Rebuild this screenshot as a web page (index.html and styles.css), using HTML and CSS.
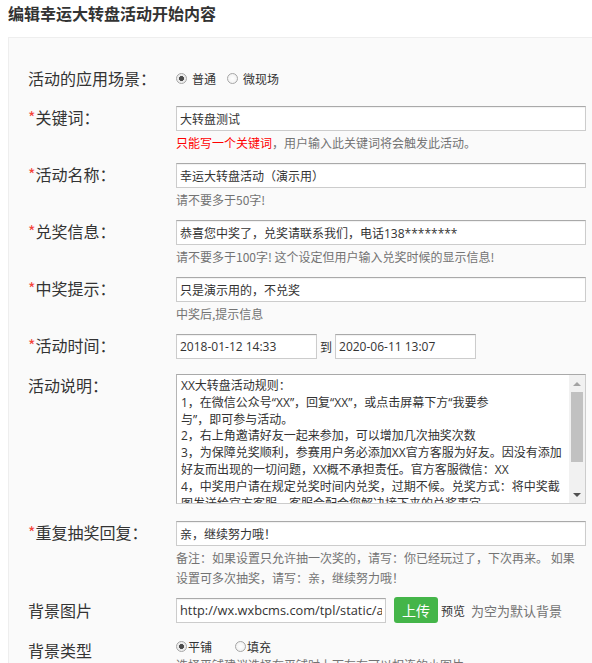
FILE: index.html
```html
<!DOCTYPE html>
<html lang="zh-CN">
<head>
<meta charset="utf-8">
<title>编辑幸运大转盘活动开始内容</title>
<link rel="stylesheet" href="styles.css">
</head>
<body>
<h3 class="page-title">编辑幸运大转盘活动开始内容</h3>
<div class="panel">
  <div class="row row-scene">
    <label class="lbl">活动的应用场景：</label>
    <div class="ctrl radios">
      <label class="radio"><input type="radio" name="scene" checked><span>普通</span></label>
      <label class="radio"><input type="radio" name="scene"><span>微现场</span></label>
    </div>
  </div>

  <div class="row">
    <label class="lbl"><span class="req">*</span>关键词：</label>
    <div class="ctrl">
      <input class="input" type="text" value="大转盘测试">
      <div class="help"><span class="warn">只能写一个关键词</span>，用户输入此关键词将会触发此活动。</div>
    </div>
  </div>

  <div class="row">
    <label class="lbl"><span class="req">*</span>活动名称：</label>
    <div class="ctrl">
      <input class="input" type="text" value="幸运大转盘活动（演示用）">
      <div class="help">请不要多于50字!</div>
    </div>
  </div>

  <div class="row">
    <label class="lbl"><span class="req">*</span>兑奖信息：</label>
    <div class="ctrl">
      <input class="input" type="text" value="恭喜您中奖了，兑奖请联系我们，电话138********">
      <div class="help">请不要多于100字! 这个设定但用户输入兑奖时候的显示信息!</div>
    </div>
  </div>

  <div class="row">
    <label class="lbl"><span class="req">*</span>中奖提示：</label>
    <div class="ctrl">
      <input class="input" type="text" value="只是演示用的，不兑奖">
      <div class="help">中奖后,提示信息</div>
    </div>
  </div>

  <div class="row row-date">
    <label class="lbl"><span class="req">*</span>活动时间：</label>
    <div class="ctrl dates">
      <input class="input date" type="text" value="2018-01-12 14:33">
      <span class="to">到</span>
      <input class="input date" type="text" value="2020-06-11 13:07">
    </div>
  </div>

  <div class="row row-desc">
    <label class="lbl">活动说明：</label>
    <div class="ctrl desc-wrap">
      <textarea class="desc" wrap="off" readonly>XX大转盘活动规则：
1，在微信公众号“XX”，回复“XX”，或点击屏幕下方“我要参
与”，即可参与活动。
2，右上角邀请好友一起来参加，可以增加几次抽奖次数
3，为保障兑奖顺利，参赛用户务必添加XX官方客服为好友。因没有添加
好友而出现的一切问题，XX概不承担责任。官方客服微信：XX
4，中奖用户请在规定兑奖时间内兑奖，过期不候。兑奖方式：将中奖截
图发送给官方客服，客服会配合您解决接下来的兑奖事宜。</textarea>
      <div class="sbar">
        <span class="sb-btn sb-up"></span>
        <span class="sb-thumb"></span>
        <span class="sb-track"></span>
        <span class="sb-btn sb-down"></span>
      </div>
    </div>
  </div>

  <div class="row row-repeat">
    <label class="lbl"><span class="req">*</span>重复抽奖回复：</label>
    <div class="ctrl">
      <input class="input" type="text" value="亲，继续努力哦！">
      <div class="help">备注：如果设置只允许抽一次奖的，请写：你已经玩过了，下次再来。 如果<br>设置可多次抽奖，请写：亲，继续努力哦！</div>
    </div>
  </div>

  <div class="row row-bg">
    <label class="lbl">背景图片</label>
    <div class="ctrl upload">
      <input class="input url" type="text" value="http://wx.wxbcms.com/tpl/static/attachment/background/view.jpg">
      <button class="btn-upload" type="button">上传</button>
      <span class="preview">预览</span>
      <span class="hint">为空为默认背景</span>
    </div>
  </div>

  <div class="row row-bgtype">
    <label class="lbl">背景类型</label>
    <div class="ctrl">
      <div class="radios radios-tight">
        <label class="radio"><input type="radio" name="bgtype" checked><span>平铺</span></label>
        <label class="radio"><input type="radio" name="bgtype"><span>填充</span></label>
      </div>
      <div class="help">选择平铺建议选择在平铺时上下左右可以相连的小图片</div>
    </div>
  </div>
</div>
</body>
</html>
```
FILE: styles.css
```css
html {
  overflow: hidden;
}

body {
  margin: 0;
  padding: 0 0 0 8px;
  background: #fff;
  color: #333;
  font-family: "Open Sans", "Noto Sans CJK SC", sans-serif;
}

.page-title {
  margin: 0;
  padding-top: 2px;
  font-family: "Noto Sans CJK SC", sans-serif;
  font-size: 16px;
  line-height: 22px;
  font-weight: bold;
  color: #333;
}

.panel {
  margin-top: 13px;
  background: #fafafa;
  border: 1px solid #eee;
  border-right: none;
  padding: 28px 0 40px 19px;
}

.row {
  display: flex;
  align-items: flex-start;
  margin-bottom: 10px;
}

.row-scene {
  margin-bottom: 16px;
}

.row-date {
  margin-bottom: 15px;
}

.row-desc {
  margin-bottom: 17px;
}

.row-repeat {
  margin-bottom: 9px;
}

.row-bg {
  align-items: center;
  margin-bottom: 16px;
}

.lbl {
  flex: none;
  width: 148px;
  font-family: "Noto Sans CJK SC", sans-serif;
  font-size: 16px;
  line-height: 22px;
  color: #333;
  white-space: nowrap;
}

.row-scene .lbl {
  line-height: 24px;
}

.req {
  color: #f4433a;
}

.ctrl {
  flex: none;
  width: 410px;
}

.input {
  display: block;
  box-sizing: border-box;
  width: 100%;
  height: 25px;
  margin: 0;
  padding: 0 3px;
  border: 1px solid #ccc;
  border-top-color: #a9a9a9;
  background: #fff;
  box-shadow: inset 0 1px 1px rgba(0, 0, 0, 0.06);
  font-family: "Open Sans", "Noto Sans CJK SC", sans-serif;
  font-size: 12px;
  color: #333;
  outline: none;
}

.help {
  margin-top: 2px;
  font-family: "Noto Sans CJK SC", sans-serif;
  font-size: 12px;
  line-height: 20px;
  color: #737373;
  white-space: nowrap;
}

.warn {
  color: #f00;
}

/* radios */
.radios {
  display: flex;
  align-items: center;
  height: 24px;
}

.radio {
  display: inline-flex;
  align-items: center;
  margin-right: 11px;
  font-family: "Noto Sans CJK SC", sans-serif;
  font-size: 12px;
  color: #333;
}

.radio input {
  -webkit-appearance: none;
  appearance: none;
  box-sizing: border-box;
  width: 11px;
  height: 11px;
  margin: 0 5px 0 0;
  border: 1px solid #a6a6a6;
  border-radius: 50%;
  background: radial-gradient(circle, #fff 0, #ededed 100%);
}

.radio input:checked {
  background: radial-gradient(circle, #4a4a4a 0, #4a4a4a 2.2px, #e9e9e9 2.8px, #f6f6f6 100%);
}

.radios-tight {
  height: 14px;
}

.radios-tight .radio {
  margin-right: 23px;
}

.radios-tight .radio input {
  margin-right: 1px;
}

/* dates */
.dates {
  display: flex;
  align-items: center;
  gap: 3px;
}

.dates .date {
  width: 141px;
}

.to {
  font-family: "Noto Sans CJK SC", sans-serif;
  font-size: 12px;
  color: #333;
}

/* textarea */
.desc-wrap {
  position: relative;
  height: 130px;
}

.desc {
  display: block;
  box-sizing: border-box;
  width: 100%;
  height: 100%;
  margin: 0;
  padding: 3px 20px 4px 4px;
  border: 1px solid #ccc;
  border-top-color: #a9a9a9;
  border-left-color: #b5b5b5;
  background: #fff;
  resize: none;
  overflow: hidden;
  white-space: pre;
  font-family: "Open Sans", "Noto Sans CJK SC", sans-serif;
  font-size: 12px;
  line-height: 16.8px;
  color: #333;
  outline: none;
}

.sbar {
  position: absolute;
  top: 1px;
  right: 1px;
  bottom: 1px;
  width: 16px;
  background: #f1f1f1;
  display: flex;
  flex-direction: column;
}

.sb-btn {
  flex: none;
  height: 17px;
  display: flex;
  align-items: center;
  justify-content: center;
}

.sb-up::before {
  content: "";
  border-left: 4px solid transparent;
  border-right: 4px solid transparent;
  border-bottom: 4px solid #a3a3a3;
}

.sb-down::before {
  content: "";
  border-left: 4px solid transparent;
  border-right: 4px solid transparent;
  border-top: 4px solid #505050;
}

.sb-thumb {
  flex: none;
  height: 70px;
  margin: 0 2px;
  background: #c1c1c1;
}

.sb-track {
  flex: 1;
}

/* upload */
.upload {
  display: flex;
  align-items: center;
  width: auto;
}

.upload .url {
  width: 210px;
  font-size: 12.8px;
}

.btn-upload {
  height: 26px;
  margin-left: 8px;
  padding: 0 8px;
  border: none;
  border-radius: 3px;
  background: #44b549;
  color: #fff;
  font-family: "Noto Sans CJK SC", sans-serif;
  font-size: 14px;
  line-height: 26px;
}

.preview {
  margin-left: 3px;
  font-family: "Noto Sans CJK SC", sans-serif;
  font-size: 12px;
  color: #333;
}

.hint {
  margin-left: 6px;
  font-family: "Noto Sans CJK SC", sans-serif;
  font-size: 13px;
  color: #737373;
}
```
